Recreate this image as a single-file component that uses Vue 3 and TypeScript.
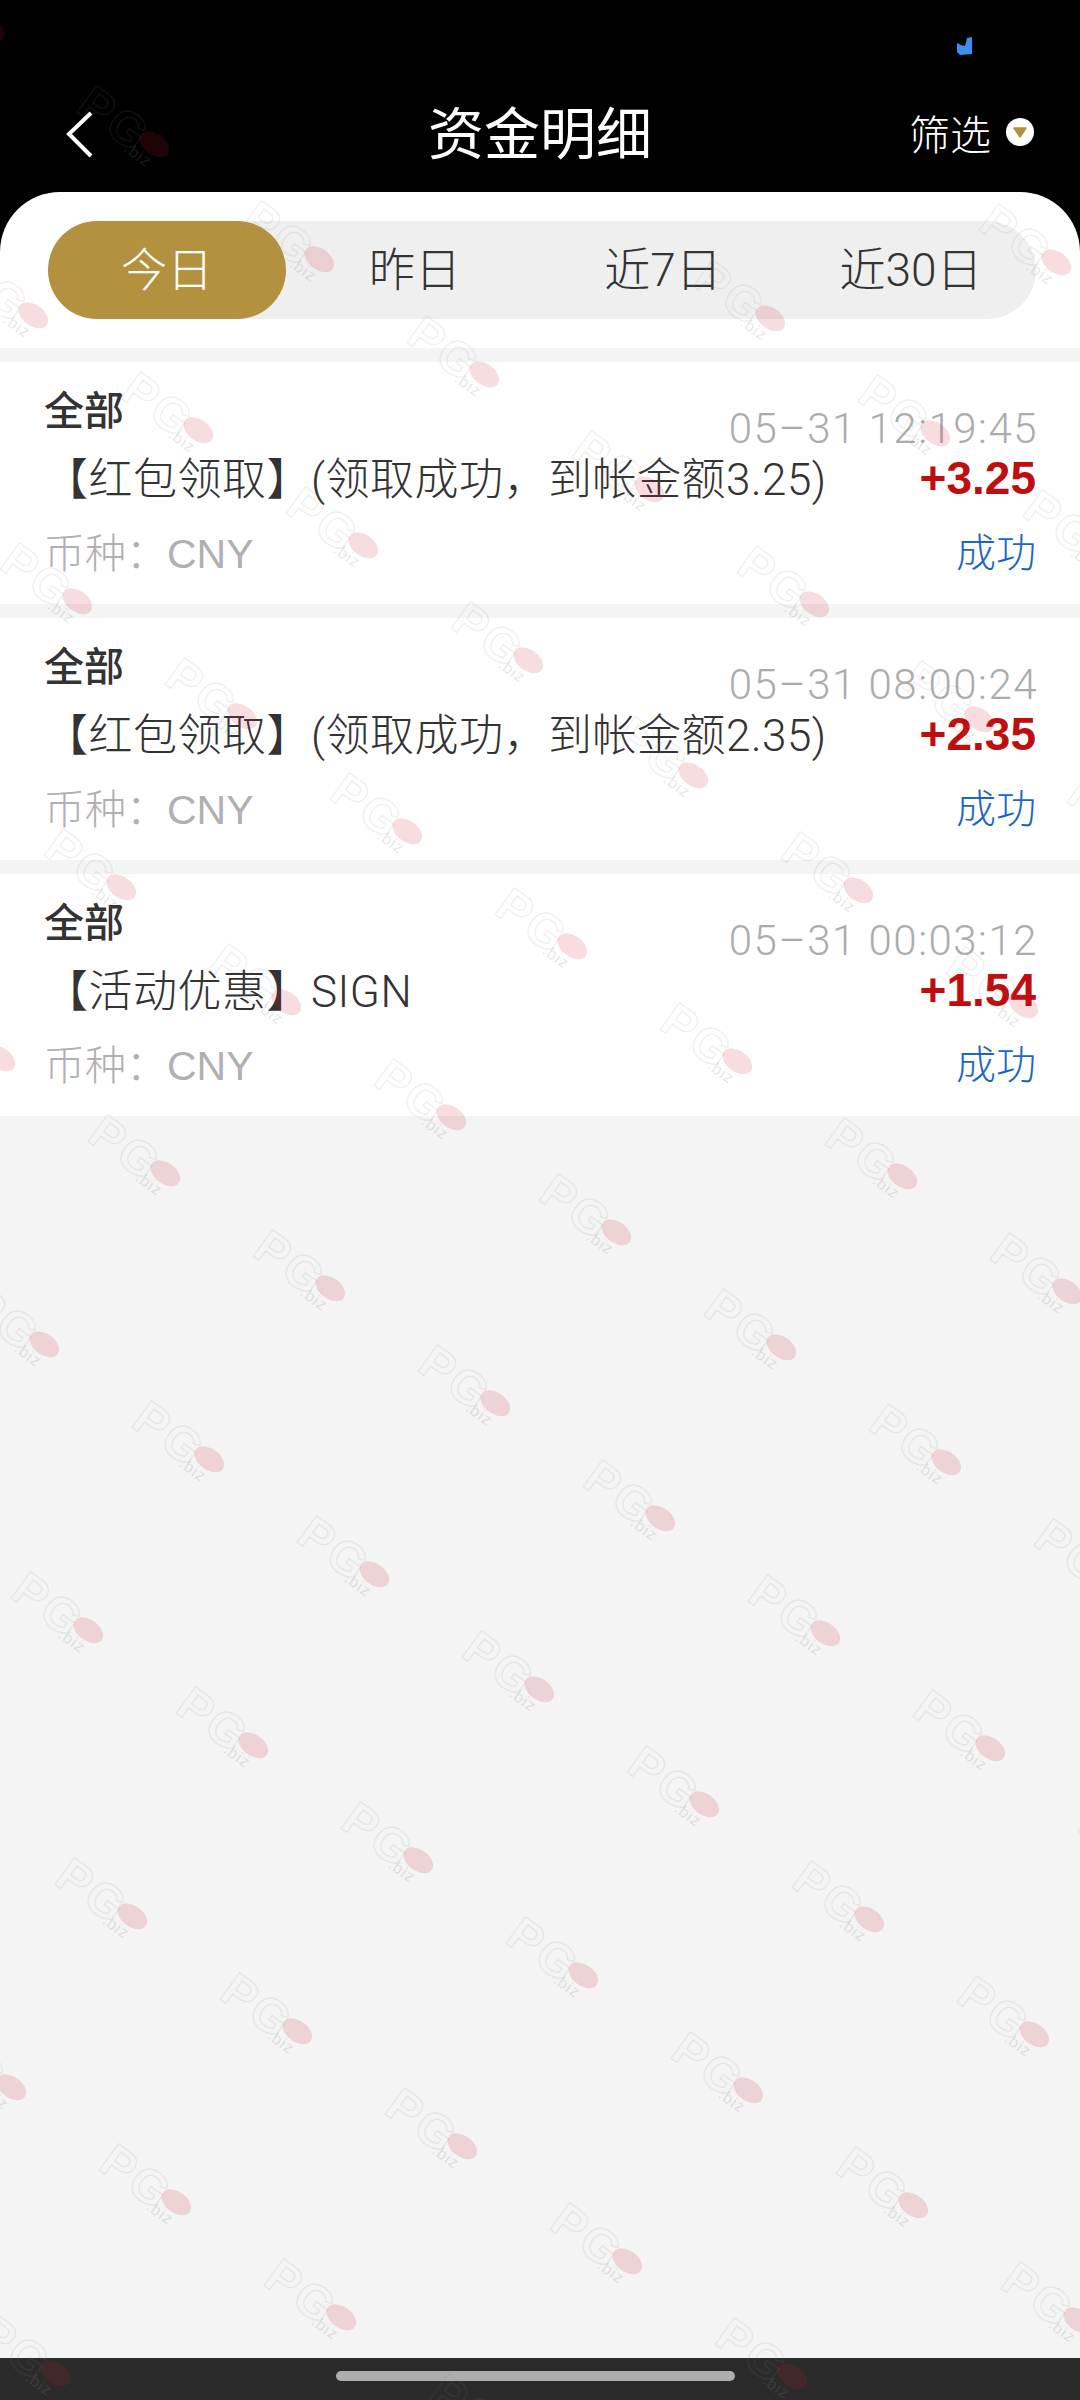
<script setup lang="ts">
import {ref} from "vue";

type Record = {time: string; desc: string; amount: string}

const tabs = ["今日", "昨日", "近7日", "近30日"]
const active = ref(0)

const records: Record[] = [
  {time: "05–31 12:19:45", desc: "【红包领取】(领取成功，到帐金额3.25)", amount: "+3.25"},
  {time: "05–31 08:00:24", desc: "【红包领取】(领取成功，到帐金额2.35)", amount: "+2.35"},
  {time: "05–31 00:03:12", desc: "【活动优惠】SIGN", amount: "+1.54"},
]

// watermark repeats on a skewed lattice, hardly any of it shows on the black header
const marks: {x: number; y: number}[] = []
for (let i = -8; i < 20; i++) {
  for (let j = -8; j < 20; j++) {
    const x = 137 + 165 * i - 121 * j
    const y = 1157 + 115 * i + 171 * j
    if (x < -80 || x > 1160 || y < -60 || y > 2460) continue
    if (y < 200 && x > 200) continue
    marks.push({x, y})
  }
}
</script>

<template>
  <div class="page">
    <header class="head">
      <div class="status">
        <svg class="net" width="16" height="18" viewBox="0 0 16 18">
          <path d="M0 6 L4 8 L8 9 L9 5 L10 1 L15 0 L15 17 L3 18 L0 15 Z" fill="#3b8fee"/>
        </svg>
      </div>
      <div class="nav">
        <svg class="back" width="30" height="48" viewBox="0 0 30 48">
          <path d="M27 3 L5 24 L27 46" fill="none" stroke="#fff" stroke-width="4"/>
        </svg>
        <div class="title">资金明细</div>
        <div class="filter">
          <span>筛选</span>
          <i class="dot"><svg width="14" height="11" viewBox="0 0 14 11"><path d="M1 1 H13 L7 10 Z" fill="#b3913f" stroke="#b3913f" stroke-linejoin="round" stroke-width="1.5"/></svg></i>
        </div>
      </div>
    </header>

    <div class="sheet-wrap">
      <div class="sheet">
        <div class="tabs">
          <div v-for="(t, i) in tabs" :key="t" class="tab" :class="{on: i === active}">{{ t }}</div>
        </div>
      </div>
    </div>

    <div class="list">
      <div v-for="r in records" :key="r.time" class="row">
        <div class="line first">
          <span class="kind">全部</span>
          <span class="time">{{ r.time }}</span>
        </div>
        <div class="line second">
          <span class="desc">{{ r.desc }}</span>
          <span class="amount">{{ r.amount }}</span>
        </div>
        <div class="line third">
          <span class="coin">币种：CNY</span>
          <span class="state">成功</span>
        </div>
      </div>
    </div>

    <div class="home"><div class="pill"></div></div>

    <div class="marks">
      <div v-for="m in marks" :key="`${m.x}-${m.y}`" class="mark" :style="{left: m.x + 'px', top: m.y + 'px'}">
        <b>PG</b><i></i><em>.biz</em>
      </div>
    </div>
  </div>
</template>

<style scoped>
.page {
  position: relative;
  width: 1080px;
  height: 2400px;
  overflow: hidden;
  display: flex;
  flex-direction: column;
  background: #f4f4f4;
  font-family: Roboto, "Noto Sans CJK SC", "Liberation Sans", sans-serif;
  font-weight: 300;
}
.head {
  height: 192px;
  background: #000;
  color: #fff;
}
.status {
  height: 60px;
  position: relative;
}
.net {
  position: absolute;
  left: 957px;
  top: 37px;
}
.nav {
  position: relative;
  height: 146px;
  margin-top: -1px;
  display: flex;
  justify-content: center;
}
.back {
  position: absolute;
  left: 64px;
  top: 51px;
}
.title {
  font-size: 56px;
  line-height: 152px;
  font-weight: 400;
}
.filter {
  position: absolute;
  right: 46px;
  top: 0;
  height: 146px;
  display: flex;
  align-items: center;
  gap: 15px;
  font-size: 41px;
}
.dot {
  width: 28px;
  height: 28px;
  border-radius: 50%;
  background: #fff;
  display: flex;
  align-items: center;
  justify-content: center;
}
.sheet-wrap {
  background: #000;
}
.sheet {
  height: 156px;
  background: #fff;
  border-radius: 60px 60px 0 0;
  padding: 29px 44px 0 48px;
  box-sizing: border-box;
}
.tabs {
  height: 98px;
  border-radius: 49px;
  background: #efefef;
  display: flex;
  gap: 10px;
}
.tab {
  width: 238px;
  height: 98px;
  line-height: 98px;
  border-radius: 49px;
  text-align: center;
  font-size: 46px;
  color: #333;
}
.tab.on {
  background: #b3913f;
  color: #fff;
}
.list {
  flex: 1;
  padding-top: 14px;
  display: flex;
  flex-direction: column;
  gap: 14px;
}
.row {
  background: #fff;
  padding: 26px 44px 27px 44px;
}
.line {
  display: flex;
  justify-content: space-between;
}
.first {
  height: 66px;
}
.kind {
  font-size: 40px;
  line-height: 48px;
  font-weight: 500;
  color: #333;
}
.time {
  align-self: flex-end;
  font-size: 42px;
  line-height: 50px;
  letter-spacing: 1.5px;
  margin-right: -2px;
  color: #acacac;
}
.second {
  height: 48px;
  font-size: 44px;
  color: #333;
}
.desc {
  white-space: nowrap;
  line-height: 53px;
  letter-spacing: 0.5px;
}
.amount {
  font-family: "Liberation Sans", sans-serif;
  font-weight: 700;
  font-size: 46px;
  line-height: 48px;
  color: #c00d0d;
}
.third {
  height: 48px;
  line-height: 50px;
  margin-top: 27px;
  font-size: 40px;
}
.coin {
  font-family: "Liberation Sans", "Noto Sans CJK SC", sans-serif;
  font-size: 41px;
  color: #b0b0b0;
}
.state {
  color: #1a66c8;
}
.home {
  height: 42px;
  background: #2b2b2b;
  display: flex;
  justify-content: center;
  padding-top: 13px;
  box-sizing: border-box;
}
.pill {
  width: 399px;
  height: 10px;
  border-radius: 5px;
  background: #aeaeae;
  margin-right: 9px;
}
.marks {
  position: absolute;
  inset: 0;
  pointer-events: none;
}
.mark {
  position: absolute;
  width: 110px;
  height: 46px;
  margin: -23px 0 0 -55px;
  transform: rotate(36deg);
  font-family: "Liberation Sans", sans-serif;
}
.mark b {
  position: absolute;
  left: 3px;
  top: 0;
  font-size: 48px;
  line-height: 46px;
  letter-spacing: 3px;
  font-weight: 700;
  color: transparent;
  -webkit-text-stroke: 1.5px rgba(130, 130, 130, 0.13);
}
.mark i {
  position: absolute;
  left: 71px;
  top: 9px;
  width: 33px;
  height: 21px;
  border-radius: 50%;
  background: rgba(205, 30, 50, 0.15);
}
.mark em {
  position: absolute;
  left: 66px;
  top: 30px;
  font-size: 16px;
  line-height: 16px;
  letter-spacing: 1px;
  font-style: normal;
  color: rgba(130, 130, 130, 0.2);
}
</style>

<style>
html, body {
  margin: 0;
  background: #f4f4f4;
}
</style>
